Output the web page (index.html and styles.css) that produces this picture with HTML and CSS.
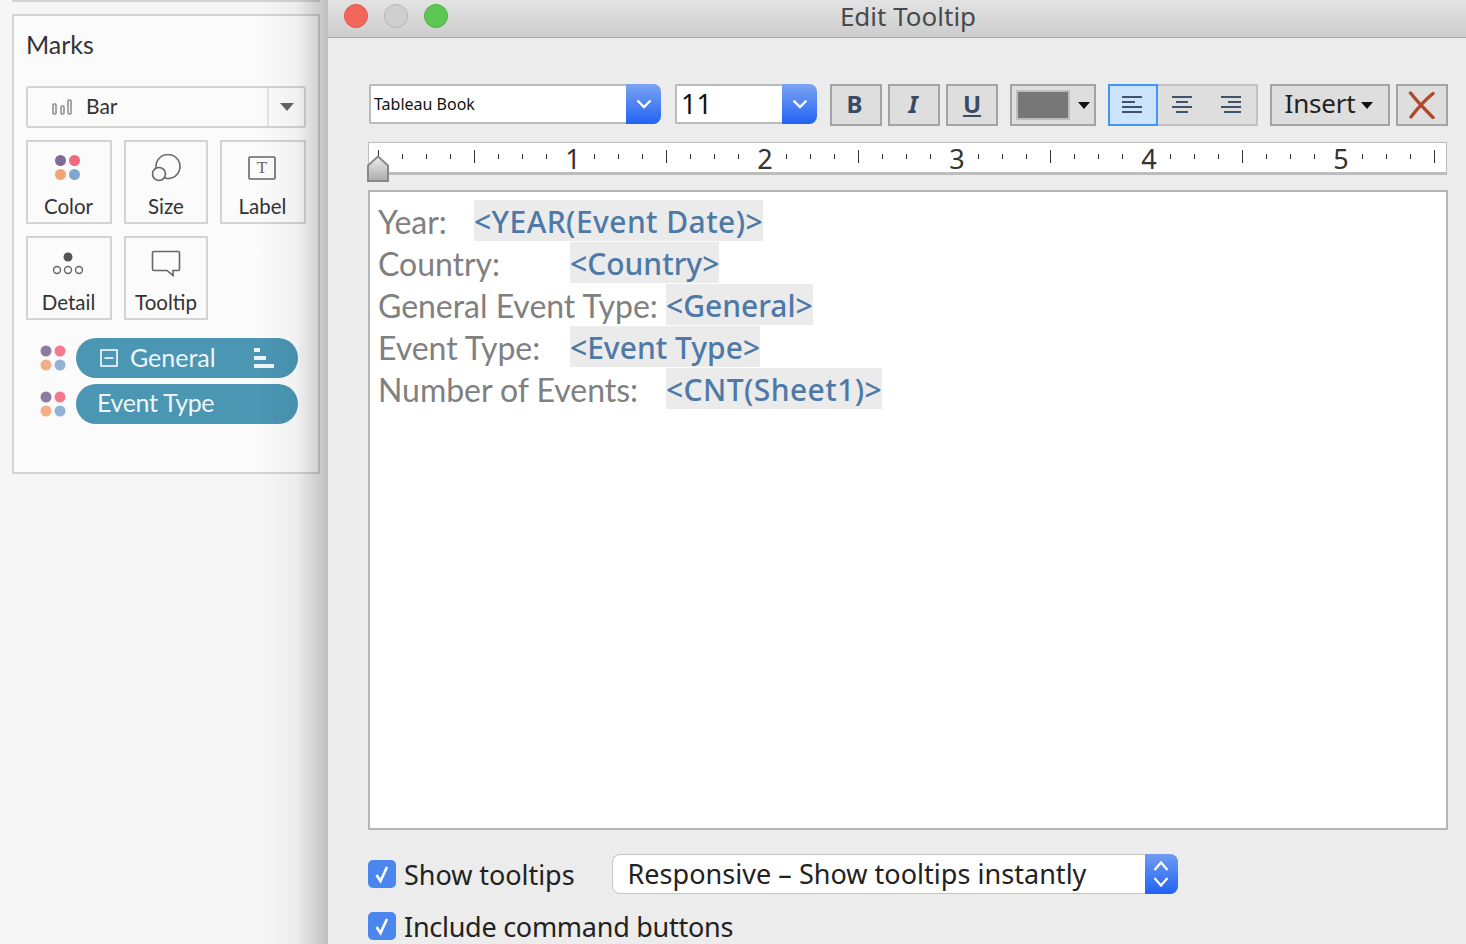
FILE: index.html
```html
<!DOCTYPE html>
<html lang="en">
<head>
  <meta charset="UTF-8">
  <title>Edit Tooltip</title>
  <link rel="stylesheet" href="styles.css">
</head>
<body>
<aside class="side">
  <div class="topline"></div>
  <section class="marks">
    <h3>Marks</h3>
    <div class="mark-type">
      <svg class="bar-ico" width="20" height="18" viewBox="0 0 20 18"><g fill="none" stroke="#8a8a8a" stroke-width="1.5"><rect x="1" y="6" width="3" height="10" rx="1"/><rect x="9" y="8" width="3" height="8" rx="1"/><rect x="16" y="2" width="3" height="14" rx="1"/></g></svg>
      <span class="mark-name">Bar</span>
      <span class="mark-drop"><i class="tri"></i></span>
    </div>
    <div class="shelf">
      <div class="card c86">
        <svg class="shift color-ico" width="28" height="28" viewBox="0 0 28 28"><circle cx="7.500" cy="7.500" r="5.500" fill="#7f6a97"/><circle cx="21.500" cy="7.500" r="5.500" fill="#f0697f"/><circle cx="7.500" cy="21.500" r="5.500" fill="#f0a573"/><circle cx="21.500" cy="21.500" r="5.500" fill="#7ea6d0"/></svg>
        <span>Color</span>
      </div>
      <div class="card c84">
        <svg width="30" height="28" viewBox="0 0 30 28"><g fill="none" stroke="#666" stroke-width="1.600"><circle cx="17" cy="12.500" r="12"/><circle cx="8" cy="20" r="6.500" fill="#fafafa"/></g></svg>
        <span>Size</span>
      </div>
      <div class="card c86">
        <svg class="shift" width="28" height="24" viewBox="0 0 28 24"><rect x="1" y="1" width="26" height="22" rx="1" fill="none" stroke="#666" stroke-width="1.600"/><text x="14" y="17" text-anchor="middle" class="t-glyph">T</text></svg>
        <span>Label</span>
      </div>
      <div class="card c86">
        <svg class="shift" width="32" height="24" viewBox="0 0 32 24"><circle cx="16" cy="5" r="4.500" fill="#555"/><g fill="none" stroke="#666" stroke-width="1.400"><circle cx="5" cy="18" r="3.500"/><circle cx="16" cy="18" r="3.500"/><circle cx="27" cy="18" r="3.500"/></g></svg>
        <span>Detail</span>
      </div>
      <div class="card c84">
        <svg width="30" height="28" viewBox="0 0 30 28"><path d="M3 1.500h24a1.500 1.500 0 0 1 1.500 1.500v16a1.500 1.500 0 0 1-1.500 1.500h-5v5l-6-5H3a1.500 1.500 0 0 1-1.500-1.500V3A1.500 1.500 0 0 1 3 1.500z" fill="none" stroke="#666" stroke-width="1.600"/></svg>
        <span>Tooltip</span>
      </div>
    </div>
    <div class="pill-row">
      <svg class="dots" width="26" height="26" viewBox="0 0 26 26"><circle cx="6" cy="6" r="5.500" fill="#8d7aa0"/><circle cx="20" cy="6" r="5.500" fill="#f5788c"/><circle cx="6" cy="20" r="5.500" fill="#f2ae85"/><circle cx="20" cy="20" r="5.500" fill="#93b2d6"/></svg>
      <div class="pill">
        <svg class="minus" width="18" height="18" viewBox="0 0 18 18"><rect x="1" y="1" width="16" height="16" fill="none" stroke="#eef5f8" stroke-width="1.700"/><rect x="4.500" y="8.200" width="9" height="1.700" fill="#eef5f8"/></svg>
        <span>General</span>
        <svg class="sort" width="20" height="20" viewBox="0 0 20 20"><g fill="#eef5f8"><rect x="0" y="0" width="6" height="4"/><rect x="0" y="8" width="12" height="4"/><rect x="0" y="16" width="20" height="4"/></g></svg>
      </div>
    </div>
    <div class="pill-row">
      <svg class="dots" width="26" height="26" viewBox="0 0 26 26"><circle cx="6" cy="6" r="5.500" fill="#8d7aa0"/><circle cx="20" cy="6" r="5.500" fill="#f5788c"/><circle cx="6" cy="20" r="5.500" fill="#f2ae85"/><circle cx="20" cy="20" r="5.500" fill="#93b2d6"/></svg>
      <div class="pill plain"><span>Event Type</span></div>
    </div>
  </section>
</aside>

<main class="win">
  <header class="titlebar">
    <i class="light red"></i><i class="light grey"></i><i class="light green"></i>
    <span class="title">Edit Tooltip</span>
  </header>
  <div class="content">
    <div class="toolbar">
      <div class="combo font-combo"><span class="val">Tableau Book</span><span class="arrow"><svg width="16" height="10" viewBox="0 0 16 10"><path d="M1.500 1.500L8 8l6.500-6.500" fill="none" stroke="#fff" stroke-width="2.400"/></svg></span></div>
      <div class="combo size-combo"><span class="val">11</span><span class="arrow"><svg width="16" height="10" viewBox="0 0 16 10"><path d="M1.500 1.500L8 8l6.500-6.500" fill="none" stroke="#fff" stroke-width="2.400"/></svg></span></div>
      <div class="tbtn fmt bold"><span>B</span></div>
      <div class="tbtn fmt ital"><span>I</span></div>
      <div class="tbtn fmt under"><span>U</span></div>
      <div class="tbtn color-btn"><i class="swatch"></i><i class="tri dark"></i></div>
      <div class="align-group">
        <div class="al on"><svg width="22" height="18" viewBox="0 0 22 18"><path d="M1 1h20M1 6h13M1 11h20M1 16h20" stroke="#3f526b" stroke-width="1.800"/></svg></div>
        <div class="al"><svg width="22" height="18" viewBox="0 0 22 18"><path d="M1 1h20M5 6h12M1 11h20M5 16h12" stroke="#3f526b" stroke-width="1.800"/></svg></div>
        <div class="al"><svg width="22" height="18" viewBox="0 0 22 18"><path d="M1 1h20M8 6h13M1 11h20M4 16h17" stroke="#3f526b" stroke-width="1.800"/></svg></div>
      </div>
      <div class="tbtn insert"><span>Insert</span><i class="tri dark"></i></div>
      <div class="tbtn close-btn"><svg width="28" height="28" viewBox="0 0 28 28"><path d="M2.500 2c6 7.500 15 17 22.500 24.500M25 2.500C17 9 9 18 3 26" fill="none" stroke="#b0492a" stroke-width="3.400" stroke-linecap="round"/></svg></div>
    </div>

    <div class="ruler">
      <svg class="ruler-svg" width="1077" height="29" viewBox="0 0 1077 29">
        <path d="M9.500 7v10M33.500 11v5M57.500 11v5M81.500 11v5M105.500 7v13M129.500 11v5M153.500 11v5M177.500 11v5M225.500 11v5M249.500 11v5M273.500 11v5M297.500 7v13M321.500 11v5M345.500 11v5M369.500 11v5M417.500 11v5M441.500 11v5M465.500 11v5M489.500 7v13M513.500 11v5M537.500 11v5M561.500 11v5M609.500 11v5M633.500 11v5M657.500 11v5M681.500 7v13M705.500 11v5M729.500 11v5M753.500 11v5M801.500 11v5M825.500 11v5M849.500 11v5M873.500 7v13M897.500 11v5M921.500 11v5M945.500 11v5M993.500 11v5M1017.500 11v5M1041.500 11v5M1065.500 7v13" stroke="#333" stroke-width="1"/>
      </svg>
      <div class="ruler-nums"><span>1</span><span>2</span><span>3</span><span>4</span><span>5</span></div>
      <svg class="indent" width="22" height="27" viewBox="0 0 22 27"><defs><linearGradient id="ind" x1="0" y1="0" x2="0" y2="1"><stop offset="0" stop-color="#eee"/><stop offset="1" stop-color="#aaa"/></linearGradient></defs><path d="M1 26V10.500L11 1.500l10 9V26z" fill="url(#ind)" stroke="#888" stroke-width="2"/></svg>
    </div>

    <div class="editor">
      <div class="line"><span class="lbl w96">Year:</span><span class="chip wide">&lt;YEAR(Event Date)&gt;</span></div>
      <div class="line"><span class="lbl w192">Country:</span><span class="chip">&lt;Country&gt;</span></div>
      <div class="line"><span class="lbl w288">General Event Type:</span><span class="chip">&lt;General&gt;</span></div>
      <div class="line"><span class="lbl w192">Event Type:</span><span class="chip">&lt;Event Type&gt;</span></div>
      <div class="line"><span class="lbl w288">Number of Events:</span><span class="chip wide">&lt;CNT(Sheet1)&gt;</span></div>
    </div>

    <div class="opt first">
      <span class="check"><svg width="18" height="20" viewBox="0 0 18 20"><path d="M3.500 11l4 6L14 3" fill="none" stroke="#fff" stroke-width="2.600"/></svg></span>
      <span class="opt-text">Show tooltips</span>
      <div class="popup"><span class="popup-text">Responsive – Show tooltips instantly</span><span class="stepper"><svg width="18" height="30" viewBox="0 0 18 30"><path d="M2.500 11L9 3.500l6.500 7.500M2.500 19L9 26.500l6.500-7.500" fill="none" stroke="#fff" stroke-width="2.200"/></svg></span></div>
    </div>
    <div class="opt">
      <span class="check"><svg width="18" height="20" viewBox="0 0 18 20"><path d="M3.500 11l4 6L14 3" fill="none" stroke="#fff" stroke-width="2.600"/></svg></span>
      <span class="opt-text narrow">Include command buttons</span>
    </div>
  </div>
</main>
</body>
</html>
```
FILE: styles.css
```css
html, body { height: 100%; }
body { margin: 0; display: flex; height: 944px; overflow: hidden; background: #ececec;
  font-family: "Lato", "Liberation Sans", sans-serif; color: #333; }

/* marks panel */
.side { position: relative; width: 328px; flex: none; background: #f6f6f6; padding: 0 8px 0 12px; box-sizing: border-box; }
.side::after { content: ""; position: absolute; top: 0; bottom: 0; right: 0; width: 70px;
  background: linear-gradient(to right, rgba(0,0,0,0), rgba(0,0,0,.04) 55%, rgba(0,0,0,.22)); }
.topline { height: 2px; background: #d4d4d4; margin-bottom: 12px; }
.marks { border: 2px solid #d4d4d4; background: #fbfbfb; height: 460px; box-sizing: border-box; padding: 0 12px; }
.marks h3 { margin: 0; font-weight: 400; font-size: 25px; line-height: 28px; padding: 14px 0 28px 0; color: #333; }
.mark-type { height: 42px; box-sizing: border-box; border: 2px solid #d4d4d4; border-radius: 3px; display: flex; align-items: center; }
.bar-ico { margin-left: 24px; }
.mark-name { font-size: 21px; line-height: 24px; margin: -2px 0 0 14px; flex: 1; }
.mark-drop { width: 35px; height: 100%; border-left: 2px solid #e2e2e2; display: flex; align-items: center; justify-content: center; }
.tri { display: inline-block; width: 0; height: 0; border: 7px solid transparent; border-top: 8px solid #666; border-bottom: 0; }
.tri.dark { border-top-color: #111; border-width: 7px 6.5px 0; }
.shelf { display: grid; grid-template-columns: 86px 84px 86px; gap: 12px; margin-top: 12px; }
.card { height: 84px; box-sizing: border-box; border: 2px solid #d4d4d4; display: flex; flex-direction: column; align-items: center; padding-top: 12px; font-size: 20.5px; color: #333; }
.card svg { height: 28px; flex: none; }
.card svg.shift { margin-left: -2px; }
.card svg.color-ico { margin: -1px 0 1px -4px; }
.card span { margin-top: 11px; line-height: 26px; }
.c86 span { margin-left: -1px; }
.pill-row { display: flex; align-items: center; gap: 10px; margin: 6px 0 0 14px; }
.shelf + .pill-row { margin-top: 18px; }
.dots { flex: none; }
.pill { width: 222px; height: 40px; border-radius: 20px; background: #4a96b3; color: #eef5f8; font-size: 25px; display: flex; align-items: center; box-sizing: border-box; padding: 0 24px; }
.pill span { margin-top: -3px; }
.pill .minus { margin-right: 12px; }
.pill .sort { margin-left: auto; }
.pill.plain { padding-left: 21px; letter-spacing: -.35px; }
.pill.plain span { margin-top: -5px; }

/* window */
.win { flex: 1; display: flex; flex-direction: column; min-width: 0; }
.titlebar { height: 38px; flex: none; box-sizing: border-box; border-bottom: 1px solid #a9a9a9; background: linear-gradient(#e3e3e3, #cdcdcd); display: flex; align-items: flex-start; position: relative; padding: 4px 0 0 16px; gap: 16px; }
.light { width: 24px; height: 24px; border-radius: 50%; box-sizing: border-box; border: 1px solid; }
.red { background: #f2665b; border-color: #e0564c; }
.grey { background: #cfcfcf; border-color: #b5b5b5; }
.green { background: #5ec653; border-color: #4eb044; }
.title { position: absolute; left: 22px; right: 0; top: -1px; text-align: center; font-size: 26px; line-height: 34px; color: #4a4a4a; font-family: "Noto Sans", sans-serif; }
.content { padding: 46px 18px 0 40px; }

.toolbar { display: flex; align-items: flex-start; height: 42px; margin-left: 1px; }
.combo { display: flex; height: 40px; box-sizing: border-box; background: #fff; border: 2px solid #bbb; border-right: 0; border-radius: 2px 8px 8px 2px; font-family: "Noto Sans", sans-serif; color: #111; }
.font-combo { width: 292px; }
.size-combo { width: 142px; margin-left: 14px; }
.val { flex: 1; align-self: center; padding-left: 3px; font-size: 16px; }
.size-combo .val { font-size: 27px; padding-left: 4px; margin-top: -2px; }
.arrow { width: 35px; margin: -2px 0; border-radius: 0 8px 8px 0; background: linear-gradient(#7ba4f2, #2163f3); display: flex; align-items: center; justify-content: center; }
.tbtn { height: 42px; box-sizing: border-box; border: 2px solid #a4a4a4; background: #dedede; display: flex; align-items: center; justify-content: center; }
.fmt { width: 52px; margin-left: 6px; font-family: "Noto Sans", sans-serif; font-size: 24px; color: #3a4a63; font-weight: 700; }
.fmt span { margin: -3px 3px 0 0; }
.under span { margin-right: 0; }
.ital span { margin-right: 2px; }
.bold { margin-left: 13px; }
.ital { font-style: italic; }
.under { text-decoration: underline; }
.color-btn { width: 86px; margin-left: 12px; padding: 0 4px; justify-content: space-between; }
.swatch { background: #777; border: 2px solid #bdbdbd; margin-right: 4px; width: 50px; height: 26px; }
.align-group { display: flex; width: 150px; height: 42px; margin-left: 12px; box-sizing: border-box; border: 2px solid #c2c2c2; background: #dedede; }
.al { flex: 1; display: flex; align-items: center; justify-content: center; padding-right: 2px; }
.al.on { flex: none; width: 50px; margin: -2px 0 -2px -2px; background: #cbe3fb; border: 2px solid #3f96f5; box-sizing: border-box; }
.insert { width: 120px; margin-left: 12px; padding-right: 2px; font-family: "Noto Sans", sans-serif; font-size: 26px; color: #222; gap: 6px; letter-spacing: -.2px; }
.insert span { margin-top: -4px; }
.close-btn { width: 52px; margin-left: 6px; }

.ruler { position: relative; height: 33px; margin-top: 16px; box-sizing: border-box; width: 1079px; background: #fff; border: 1px solid #bdbdbd; border-bottom-width: 3px; }
.ruler svg { display: block; }
.ruler-nums { position: absolute; left: 108px; top: 2px; display: grid; grid-template-columns: repeat(5, 192px); font: 27px/27px "Noto Sans", sans-serif; color: #333; text-align: center; }
.ruler .indent { position: absolute; left: -2px; top: 12px; }

.editor { height: 640px; width: 1080px; margin-top: 15px; box-sizing: border-box; border: 2px solid #b5b5b5; background: #fff; padding: 8px 0 0 8px; font-size: 32px; }
.line { height: 42px; line-height: 43px; display: flex; }
.lbl { color: #808080; flex: none; letter-spacing: -.03px; }
.w96 { width: 96px; }
.w192 { width: 192px; }
.w288 { width: 288px; }
.chip { background: #ebebeb; color: #4e79a7; height: 41px; font-family: "Noto Sans", sans-serif; font-size: 30px; font-weight: 500; }
.chip.wide { letter-spacing: .42px; }

.opt { display: flex; align-items: center; height: 40px; font-family: "Noto Sans", sans-serif; font-size: 27px; color: #222; margin-top: 12px; }
.opt.first { margin-top: 24px; }
.check { width: 28px; height: 28px; border-radius: 5px; background: #4a86ee; display: flex; align-items: center; justify-content: center; flex: none; }
.opt-text { margin-left: 8px; letter-spacing: -.05px; }
.opt-text.narrow { letter-spacing: -.27px; }
.popup { display: flex; align-items: center; width: 566px; height: 40px; margin-left: 37px; box-sizing: border-box; background: #fff; border-radius: 8px; box-shadow: inset 0 0 0 1px #c4c4c4; padding-left: 16px; overflow: hidden; }
.popup-text { flex: 1; margin-top: -2px; letter-spacing: .03px; }
.stepper { width: 33px; height: 100%; background: linear-gradient(#6f9cf2, #2163f3); display: flex; align-items: center; justify-content: center; }
.t-glyph { font: 400 17px "Liberation Serif", serif; fill: #666; }
```
